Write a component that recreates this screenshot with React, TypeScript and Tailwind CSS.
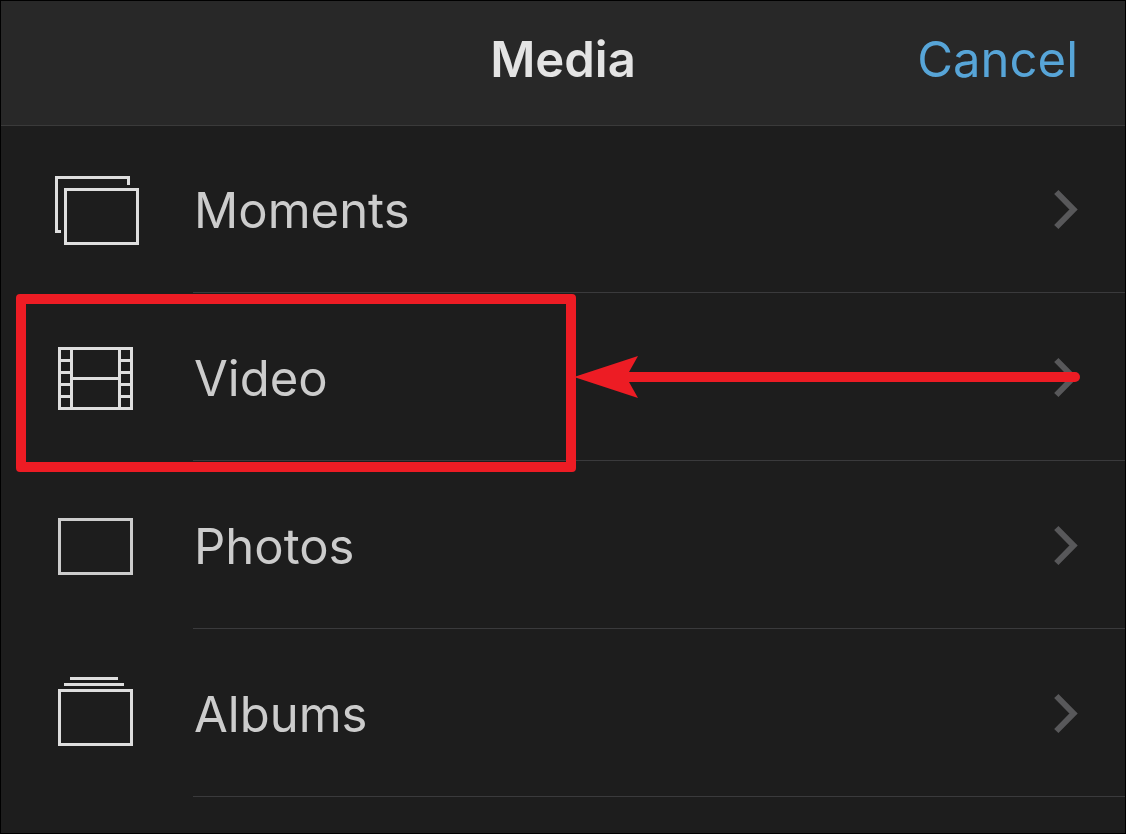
import React from 'react';

interface MediaItem {
  id: string;
  label: string;
  icon: React.ReactNode;
  highlighted?: boolean;
}

const items: MediaItem[] = [
  {
    id: 'moments',
    label: 'Moments',
    icon: (
      <g stroke="#dedede">
        <path d="M73.5 19V11.5H1.5V65.5H6" />
        <rect x="10.5" y="23.5" width="72" height="54" />
      </g>
    ),
  },
  {
    id: 'video',
    label: 'Video',
    highlighted: true,
    icon: (
      <g stroke="#dedede">
        <rect x="4.5" y="14.5" width="72" height="60" />
        <path d="M16.5 14.5V74.5M64.5 14.5V74.5M16.5 44.5H64.5" />
        <path d="M4.5 26.5H16.5M4.5 38.5H16.5M4.5 50.5H16.5M4.5 62.5H16.5" />
        <path d="M64.5 26.5H76.5M64.5 38.5H76.5M64.5 50.5H76.5M64.5 62.5H76.5" />
      </g>
    ),
  },
  {
    id: 'photos',
    label: 'Photos',
    icon: <rect x="4.5" y="17.5" width="72" height="54" stroke="#cccccc" />,
  },
  {
    id: 'albums',
    label: 'Albums',
    icon: (
      <g stroke="#dedede">
        <path d="M15 8.5H63M9 14.5H69" />
        <rect x="4.5" y="20.5" width="72" height="54" />
      </g>
    ),
  },
];

const Chevron: React.FC = () => (
  <svg className="w-6 h-11 shrink-0" viewBox="0 0 24 44" fill="none" aria-hidden="true">
    <path d="M2.3 3L19.5 20.5L2.3 38" stroke="#58585a" strokeWidth="6" />
  </svg>
);

const Highlight: React.FC = () => (
  <div className="pointer-events-none absolute inset-0 z-10" aria-hidden="true">
    {/* Frame */}
    <div className="absolute left-[15px] top-px w-[560px] h-[178px] border-10 border-[#ed1c24] rounded-sm" />
    {/* Arrow */}
    <div className="absolute left-[573px] right-[45px] top-[63px] flex items-center">
      <svg className="w-16 h-[42px] shrink-0" viewBox="0 0 64 42">
        <path d="M0 21L64 0L55 16V26L64 42Z" fill="#ed1c24" />
      </svg>
      <div className="flex-1 h-[10px] -ml-[10px] bg-[#ed1c24] rounded-r-full" />
    </div>
  </div>
);

const MediaRow: React.FC<{ item: MediaItem }> = ({ item }) => (
  <li className="relative">
    <button type="button" className="flex w-full h-[168px] text-left">
      <span className="flex items-center w-48 h-[167px] pl-[54px] shrink-0">
        <svg
          className="w-[85px] h-[85px]"
          viewBox="0 0 85 85"
          fill="none"
          strokeWidth="3"
          aria-hidden="true"
        >
          {item.icon}
        </svg>
      </span>
      <span className="flex flex-1 items-center justify-between h-full pt-1 pl-px pr-[47px] border-b border-[#3a3a3c]">
        <span className="text-[49px] leading-[60px] text-[#cccccc]">{item.label}</span>
        <Chevron />
      </span>
    </button>
    {item.highlighted && <Highlight />}
  </li>
);

export default function App() {
  return (
    <div className="min-h-screen bg-[#1d1d1d] border border-black font-['Inter','Liberation_Sans',sans-serif]">
      {/* Header */}
      <header className="grid grid-cols-3 items-center h-[125px] px-[47px] pb-1.5 bg-[#282828] border-b border-[#3a3a3a]">
        <h1 className="col-start-2 text-center text-[49px] leading-[60px] font-semibold text-[#e4e4e4]">
          Media
        </h1>
        <button type="button" className="justify-self-end text-[49px] leading-[60px] text-[#57a5d8]">
          Cancel
        </button>
      </header>

      {/* Media sources */}
      <ul className="-mt-px">
        {items.map((item) => (
          <MediaRow key={item.id} item={item} />
        ))}
      </ul>
    </div>
  );
}
